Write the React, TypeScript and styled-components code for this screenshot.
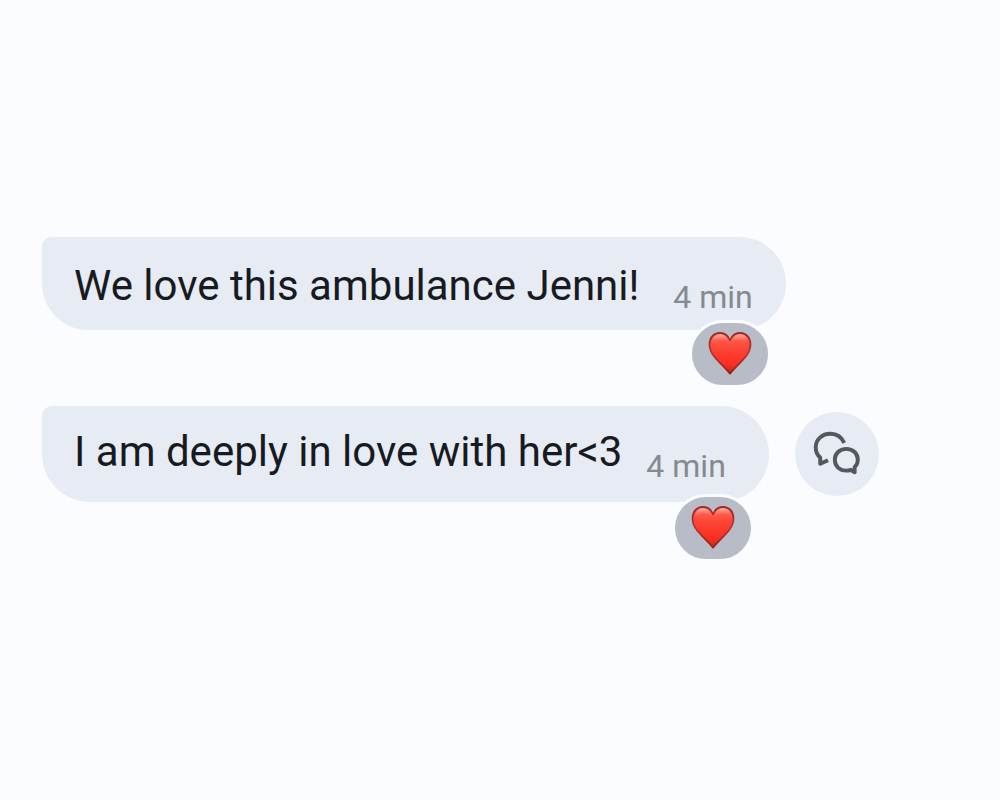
import React from "react";
import styled, { createGlobalStyle } from "styled-components";

const GlobalStyle = createGlobalStyle`
  * { box-sizing: border-box; }
  body {
    margin: 0;
    background: #fbfcff;
    font-family: Roboto, "Liberation Sans", sans-serif;
  }
`;

const Conversation = styled.main`
  min-height: 100vh;
  display: flex;
  flex-direction: column;
  justify-content: center;
  padding: 0 42px 4px;
`;

const Thread = styled.ul`
  list-style: none;
  margin: 0;
  padding: 0 0 57px;
  display: flex;
  flex-direction: column;
  gap: 76px;
`;

const MessageRow = styled.li`
  display: flex;
  align-items: center;
  gap: 26px;
`;

const Bubble = styled.article<{ $roomy?: boolean }>`
  position: relative;
  display: flex;
  align-items: flex-start;
  gap: ${(p) => (p.$roomy ? 24 : 34)}px;
  padding: ${(p) => (p.$roomy ? "22px 43px 18px 32px" : "25px 33px 15px 32px")};
  border-radius: 10px 48px 48px 48px;
  background: #e6ebf4;
`;

const MessageText = styled.p`
  margin: 0;
  font-size: 42px;
  line-height: 48px;
  color: #171b21;
`;

const Timestamp = styled.time<{ $roomy?: boolean }>`
  margin-top: ${(p) => (p.$roomy ? 20 : 17)}px;
  font-size: 32px;
  line-height: 36px;
  color: #858990;
`;

const Reaction = styled.button<{ $roomy?: boolean }>`
  position: absolute;
  right: 15px;
  top: calc(100% - ${(p) => (p.$roomy ? 8 : 10)}px);
  display: grid;
  place-items: center;
  width: 82px;
  height: 68px;
  padding: 0 0 2px;
  border: 3px solid #fbfcff;
  border-radius: 34px;
  background: #b7bcc6;
`;

const ReplyButton = styled.button`
  display: grid;
  place-items: center;
  width: 84px;
  height: 84px;
  padding: 0;
  border: 0;
  border-radius: 50%;
  background: #e6ebf4;
  color: #53575e;
`;

function Heart({ id }: { id: string }) {
  return (
    <svg width="44" height="44" viewBox="0 0 44 44" aria-hidden="true">
      <defs>
        <linearGradient id={id + "-fill"} x1="0" y1="0" x2="0" y2="1">
          <stop offset="0" stopColor="#ff6a58" />
          <stop offset="0.4" stopColor="#fd4434" />
          <stop offset="0.8" stopColor="#fa2c20" />
          <stop offset="1" stopColor="#c5231c" />
        </linearGradient>
        <linearGradient id={id + "-edge"} x1="0" y1="0" x2="0" y2="1">
          <stop offset="0" stopColor="#8f2a2c" />
          <stop offset="0.5" stopColor="#b8352e" />
          <stop offset="1" stopColor="#8e211f" />
        </linearGradient>
        <linearGradient id={id + "-shine"} x1="0" y1="0" x2="0" y2="1">
          <stop offset="0" stopColor="#ffc2b6" stopOpacity="0.85" />
          <stop offset="1" stopColor="#ff6554" stopOpacity="0" />
        </linearGradient>
      </defs>
      <path
        d="M22 9.200C20 4.200 16.400 1.800 12 1.800 5.700 1.800 1.500 6.800 1.500 13.400c0 11.600 11.600 18 20.500 29.200 8.900-11.200 20.500-17.600 20.500-29.200 0-6.600-4.200-11.600-10.500-11.600-4.400 0-8 2.400-10 7.400z"
        fill={`url(#${id}-fill)`}
        stroke={`url(#${id}-edge)`}
        strokeWidth="1.7"
        strokeLinejoin="round"
      />
      <path d="M4 12C4.400 6.400 7.800 3.600 12 3.600c4 0 7 2.400 8.400 7.400-4-3-11-4-16.400 1z" fill={`url(#${id}-shine)`} />
      <path d="M40 12C39.600 6.400 36.200 3.600 32 3.600c-4 0-7 2.400-8.400 7.400 4-3 11-4 16.400 1z" fill={`url(#${id}-shine)`} />
    </svg>
  );
}

function ThreadIcon() {
  return (
    <svg width="48" height="48" viewBox="0 0 48 48" fill="none" stroke="currentColor" strokeWidth="3.9" strokeLinejoin="round" aria-hidden="true">
      <path d="M31.300 12.800C28.500 7 24 3.700 17.500 3.700 9 3.700 2.700 9.500 2.700 17.500c0 4.300 1.500 7.500 4.500 10v6.300l7.800-3.600" />
      <path d="M33.300 18.900c-6.700 0-11.500 4.600-11.500 10.900s4.800 10.800 11.500 10.800c1.700 0 3.200-.3 4.600-.6l3.800 2.200-.1-5.200c2.300-1.700 3.200-3.900 3.200-7.200 0-6.300-4.800-10.900-11.500-10.900z" />
    </svg>
  );
}

const messages = [
  { id: "first", text: "We love this ambulance Jenni!", roomy: false },
  { id: "second", text: "I am deeply in love with her<3", roomy: true },
];

export default function App() {
  return (
    <>
      <GlobalStyle />
      <Conversation>
        <Thread>
          {messages.map((m) => (
            <MessageRow key={m.id}>
              <Bubble $roomy={m.roomy}>
                <MessageText>{m.text}</MessageText>
                <Timestamp $roomy={m.roomy}>4 min</Timestamp>
                <Reaction type="button" aria-label="Heart reaction" $roomy={m.roomy}>
                  <Heart id={m.id} />
                </Reaction>
              </Bubble>
              {m.roomy && (
                <ReplyButton type="button" aria-label="Reply in thread">
                  <ThreadIcon />
                </ReplyButton>
              )}
            </MessageRow>
          ))}
        </Thread>
      </Conversation>
    </>
  );
}
